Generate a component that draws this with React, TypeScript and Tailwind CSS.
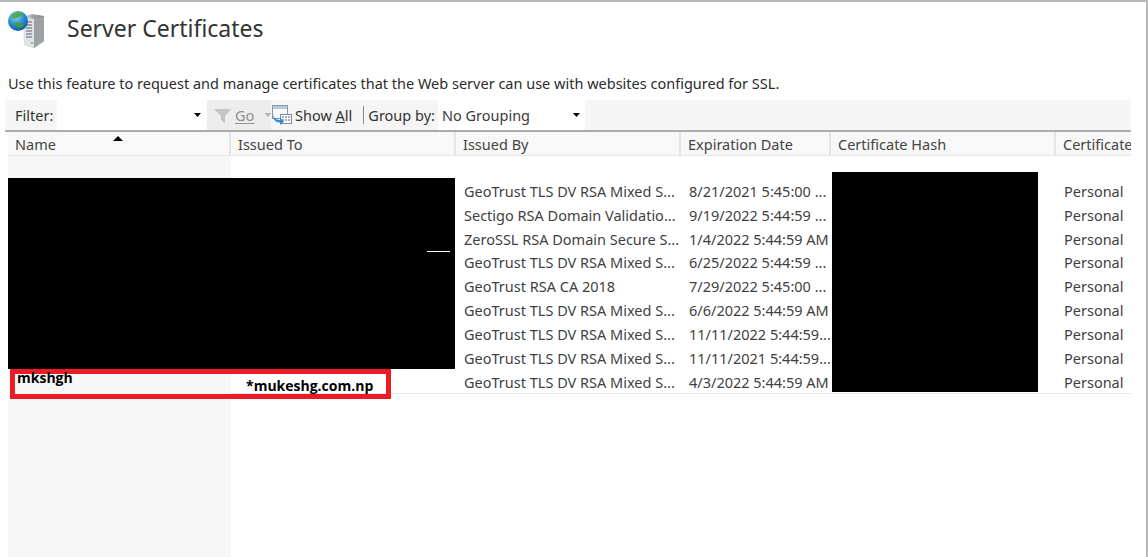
const rows = [
  ["GeoTrust TLS DV RSA Mixed S...", "8/21/2021 5:45:00 ..."],
  ["Sectigo RSA Domain Validatio...", "9/19/2022 5:44:59 ..."],
  ["ZeroSSL RSA Domain Secure S...", "1/4/2022 5:44:59 AM"],
  ["GeoTrust TLS DV RSA Mixed S...", "6/25/2022 5:44:59 ..."],
  ["GeoTrust RSA CA 2018", "7/29/2022 5:45:00 ..."],
  ["GeoTrust TLS DV RSA Mixed S...", "6/6/2022 5:44:59 AM"],
  ["GeoTrust TLS DV RSA Mixed S...", "11/11/2022 5:44:59..."],
  ["GeoTrust TLS DV RSA Mixed S...", "11/11/2021 5:44:59..."],
  ["GeoTrust TLS DV RSA Mixed S...", "4/3/2022 5:44:59 AM"],
];

const headers = [
  ["Name", "w-[223px]"],
  ["Issued To", "w-[225px]"],
  ["Issued By", "w-[225px]"],
  ["Expiration Date", "w-[150px]"],
  ["Certificate Hash", "w-[225px]"],
  ["Certificate", "w-[75px]"],
];

function ServerIcon() {
  return (
    <svg width="44" height="42" viewBox="0 0 44 42" className="shrink-0">
      <defs>
        <linearGradient id="srv" x1="0" x2="1" y1="0" y2="0">
          <stop offset="0" stopColor="#e8ebee" />
          <stop offset="0.5" stopColor="#9aa0a5" />
          <stop offset="1" stopColor="#7d8388" />
        </linearGradient>
        <radialGradient id="globe" cx="0.4" cy="0.3" r="0.8">
          <stop offset="0" stopColor="#7fd0f5" />
          <stop offset="0.6" stopColor="#1d7fcb" />
          <stop offset="1" stopColor="#0d4f97" />
        </radialGradient>
      </defs>
      <path d="M19 10 L28 7 L40 9 L40 34 L30 41 L20 38 Z" fill="url(#srv)" />
      <path d="M19 10 L30 12 L30 41 L20 38 Z" fill="#dfe3e6" />
      <path d="M30 12 L40 9 L40 34 L30 41 Z" fill="#9ba1a6" />
      <path d="M22 15h6M22 18h6M22 21h6M22 24h6M22 27h6M22 30h6" stroke="#5f666c" strokeWidth="1" />
      <rect x="27" y="35" width="2" height="2" fill="#8fc74a" />
      <circle cx="14" cy="14" r="10" fill="url(#globe)" />
      <path d="M9 7 Q14 4 19 7 Q18 10 14 10 Q11 13 8 11 Z" fill="#4fae3c" />
      <path d="M10 16 Q15 14 20 18 Q17 22 13 20 Z" fill="#3f9c37" />
    </svg>
  );
}

function FunnelIcon() {
  return (
    <svg width="19" height="17" viewBox="0 0 19 17" className="shrink-0">
      <path d="M1 2 H18 L12 9 V16 L8 13 V9 Z" fill="#c3c5c6" />
    </svg>
  );
}

function ShowAllIcon() {
  return (
    <svg width="22" height="22" viewBox="0 0 22 22" className="shrink-0">
      <rect x="1.5" y="1.5" width="15" height="13" fill="#f6f8fa" stroke="#8a97a3" />
      <rect x="2" y="2" width="14" height="3" fill="#b9c9d9" />
      <rect x="9.5" y="10.5" width="11" height="9" fill="#fff" stroke="#7e8d9b" />
      <path d="M11 13h2M14 13h2M17 13h2M11 16h2M14 16h2M17 16h2" stroke="#4d6275" strokeWidth="1.2" />
      <path d="M2 10 Q3 16 9 16 V13.5 L13 17.5 L9 21 V18.5 Q2 19 2 10Z" fill="#2f8fd6" />
    </svg>
  );
}

function Caret({ color = "bg-black" }: { color?: string }) {
  return <span className={`block w-[7px] h-[4px] [clip-path:polygon(0_0,100%_0,50%_100%)] ${color}`} />;
}

export default function App() {
  return (
    <div className="relative w-[1148px] h-[557px] overflow-hidden bg-white border-t-2 border-r-2 border-[#b8b8b8] text-[14.5px] leading-[20px] text-[#3a3a3a] [font-family:'Noto_Sans','Open_Sans',sans-serif]">
      <div className="flex items-center h-[52px] pl-[4px]">
        <ServerIcon />
        <h1 className="ml-[19px] text-[23px] font-normal text-[#333]">Server Certificates</h1>
      </div>
      <p className="mt-[19px] pl-[8px] text-[14.5px] text-[#2b2b2b] whitespace-nowrap">
        Use this feature to request and manage certificates that the Web server can use with websites configured for SSL.
      </p>
      <div className="mt-[7px] ml-[5px] w-[1126px] flex items-center h-[32px] bg-[#f5f5f5] border-b-2 border-[#a9abad] whitespace-nowrap">
        <span className="w-[52px] pl-[10px] text-[#333]">Filter:</span>
        <div className="w-[150px] h-full bg-white flex items-center justify-end pr-[6px]"><Caret /></div>
        <div className="flex items-center h-full bg-[#ededed] pl-[6px] w-[64px]">
          <FunnelIcon />
          <span className="ml-[3px] text-[#8f8f8f] underline underline-offset-2">Go</span>
          <span className="ml-[10px]"><Caret color="bg-[#b5b5b5]" /></span>
        </div>
        <ShowAllIcon />
        <span className="ml-[2px] text-[#333]">Show <span className="underline">A</span>ll</span>
        <span className="ml-[11px] w-px h-[18px] bg-[#8a8a8a]" />
        <span className="ml-[4px] text-[#333]">Group by:</span>
        <div className="ml-[3px] w-[147px] h-full bg-white flex items-center justify-between pl-[4px] pr-[5px]">
          <span>No Grouping</span>
          <Caret />
        </div>
      </div>
      <div className="ml-[8px] w-[1123px] flex h-[24px] bg-[#f8f8f8] border-b border-[#e6e6e6]">
        {headers.map(([t, w], i) => (
          <div key={t} className={`${w} relative pl-[7px] flex items-center overflow-hidden whitespace-nowrap border-r-2 border-[#e4e4e4] last:border-r-0 text-[#444]`}>
            {t}
            {i === 0 && <span className="absolute left-[105px] top-[4px] block w-[10px] h-[5px] bg-black [clip-path:polygon(50%_0,100%_100%,0_100%)]" />}
          </div>
        ))}
      </div>
      <div className="ml-[8px] w-[1123px] flex h-[401px]">
        <div className="w-[223px] bg-[#f7f7f7]" />
        <div className="flex-1 pt-[23px]">
          <div className="h-[215px] flex flex-col border-b border-[#e3e9ef]">
            {rows.map(([by, date], i) => (
              <div key={i} className="h-[23.85px] shrink-0 flex items-center whitespace-nowrap text-[#3f3f3f] border-[#eef0f2]">
                <span className="ml-[233px] w-[225px]">{by}</span>
                <span className="w-[150px]">{date}</span>
                <span className="w-[225px]" />
                <span>Personal</span>
              </div>
            ))}
          </div>
        </div>
      </div>
      <div className="absolute left-[8px] top-[176px] w-[447px] h-[191px] bg-black" />
      <div className="absolute left-[427px] top-[249px] w-[23px] h-px bg-white" />
      <div className="absolute left-[832px] top-[170px] w-[206px] h-[220px] bg-black" />
      <div className="absolute left-[10px] top-[367px] w-[381px] h-[30px] border-[5px] border-[#ed1c24]" />
      <span className="absolute left-[17px] top-[366px] text-[14px] font-bold text-black [font-family:'Open_Sans',sans-serif]">mkshgh</span>
      <span className="absolute left-[246px] top-[374px] text-[14px] font-bold text-black [font-family:'Open_Sans',sans-serif]">*mukeshg.com.np</span>
    </div>
  );
}
